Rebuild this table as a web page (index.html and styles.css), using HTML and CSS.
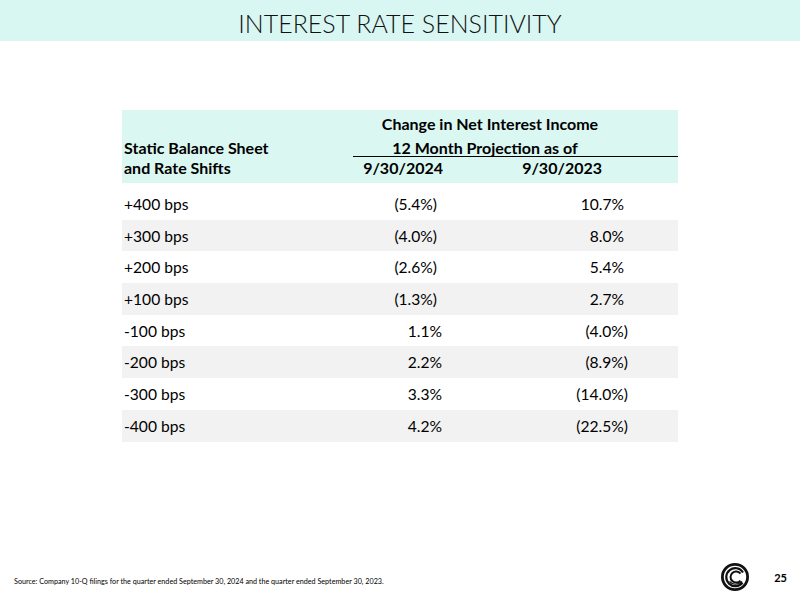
FILE: index.html
```html
<!DOCTYPE html>
<html>
<head>
<meta charset="utf-8">
<link rel="stylesheet" href="styles.css">
</head>
<body>
<div class="page">
  <header class="titlebar"><h1 class="title">INTEREST RATE SENSITIVITY</h1></header>
  <main class="content">
    <div class="table">
      <div class="thead">
        <div class="h-empty"></div>
        <div class="h-span h-top">Change in Net Interest Income</div>
        <div class="h-label h-label-mid">Static Balance Sheet</div>
        <div class="h-span h-mid">12 Month Projection as of</div>
        <div class="h-label">and Rate Shifts</div>
        <div class="h-date d1">9/30/2024</div>
        <div class="h-date d2">9/30/2023</div>
      </div>
      <div class="row"><div class="lbl">+400 bps</div><div class="c2 neg">(5.4%)</div><div class="c3 pos">10.7%</div></div>
      <div class="row alt"><div class="lbl">+300 bps</div><div class="c2 neg">(4.0%)</div><div class="c3 pos">8.0%</div></div>
      <div class="row"><div class="lbl">+200 bps</div><div class="c2 neg">(2.6%)</div><div class="c3 pos">5.4%</div></div>
      <div class="row alt"><div class="lbl">+100 bps</div><div class="c2 neg">(1.3%)</div><div class="c3 pos">2.7%</div></div>
      <div class="row"><div class="lbl">-100 bps</div><div class="c2 pos">1.1%</div><div class="c3 neg">(4.0%)</div></div>
      <div class="row alt"><div class="lbl">-200 bps</div><div class="c2 pos">2.2%</div><div class="c3 neg">(8.9%)</div></div>
      <div class="row"><div class="lbl">-300 bps</div><div class="c2 pos">3.3%</div><div class="c3 neg">(14.0%)</div></div>
      <div class="row alt"><div class="lbl">-400 bps</div><div class="c2 pos">4.2%</div><div class="c3 neg">(22.5%)</div></div>
    </div>
  </main>
  <footer class="footer">
    <p class="source">Source: Company 10-Q filings for the quarter ended September 30, 2024 and the quarter ended September 30, 2023.</p>
    <svg class="logo" viewBox="0 0 30 30" width="30" height="30" aria-hidden="true">
      <circle cx="15" cy="15" r="12.6" fill="none" stroke="#111" stroke-width="2.8"/>
      <path d="M23 10.5 A9 9 0 1 0 22.5 20.5" fill="none" stroke="#111" stroke-width="2.2"/>
      <path d="M20.5 11.5 A5.6 5.6 0 1 0 20.5 18.5" fill="none" stroke="#111" stroke-width="2"/>
      <path d="M9.5 19.5 Q15 25 22 19.5" fill="none" stroke="#111" stroke-width="1.2"/>
    </svg>
    <span class="pagenum">25</span>
  </footer>
</div>
</body>
</html>
```

FILE: styles.css
```css
html, body {
  margin: 0;
  padding: 0;
  background: #ffffff;
}
.page {
  width: 800px;
  height: 599px;
  display: flex;
  flex-direction: column;
  font-family: Lato, "Liberation Sans", sans-serif;
  color: #000;
}
.titlebar {
  height: 41px;
  background: #d9f7f2;
  display: flex;
  justify-content: center;
  align-items: center;
}
.title {
  margin: 0;
  padding-top: 5px;
  font-family: Lato, sans-serif;
  font-weight: 300;
  font-size: 25px;
  color: #111;
}
.content {
  padding-top: 69px;
  padding-left: 122px;
}
.table {
  width: 556px;
}
.thead {
  background: #dbf7f2;
  height: 73px;
  box-sizing: border-box;
  padding-top: 3px;
  display: grid;
  grid-template-columns: 231px 162px 163px;
  grid-template-rows: 22px 22px 22px;
  font-weight: 700;
  font-size: 16px;
}
.thead > div {
  line-height: 22px;
}
.h-span {
  grid-column: 2 / span 2;
  text-align: center;
}
.h-top { padding-right: 51px; }
.h-mid {
  padding-right: 61px;
  padding-top: 4px;
  line-height: 18px !important;
  border-bottom: 1.5px solid #000;
}
.h-label { padding-left: 2px; }
.h-label-mid {
  padding-top: 4px;
  line-height: 18px !important;
}
.h-date { text-align: right; }
.d1 { padding-right: 72px; }
.d2 { padding-right: 76px; }
.row {
  display: grid;
  grid-template-columns: 231px 162px 163px;
  height: 31.7px;
  align-items: center;
  font-size: 15.6px;
}
.thead + .row { margin-top: 5px; }
.alt { background: #f2f2f2; }
.lbl { padding-left: 2px; }
.c2, .c3 { text-align: right; }
.c2.pos { padding-right: 73px; }
.c2.neg { padding-right: 78px; }
.c3.pos { padding-right: 54px; }
.c3.neg { padding-right: 50px; }
.footer {
  margin-top: auto;
  height: 40px;
  display: flex;
  align-items: center;
  padding-left: 14px;
  padding-right: 13px;
  padding-bottom: 2px;
}
.source {
  margin: 0;
  font-size: 7.2px;
  padding-top: 9px;
  flex: 1;
}
.logo {
  display: block;
  margin-right: 24px;
}
.pagenum {
  font-weight: 700;
  font-size: 11px;
}
```
